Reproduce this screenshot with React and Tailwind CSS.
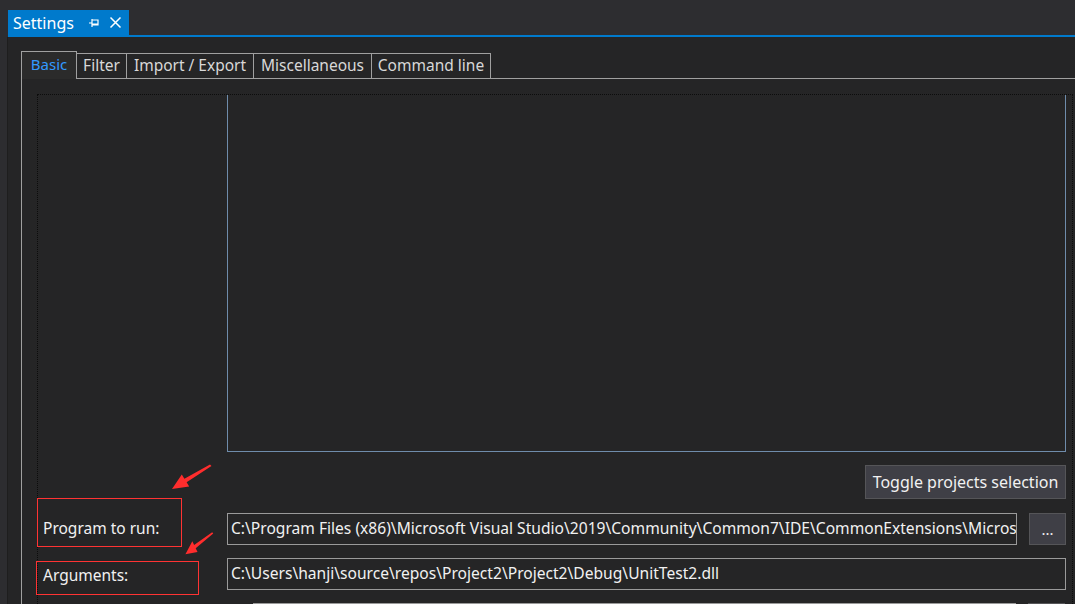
const Arrow = ({ className, w = 44, h = 30 }) => (
  <svg className={className} width={w} height={h} viewBox="0 0 44 30" preserveAspectRatio="none">
    <path d="M2 27 L11.8 12.6 L14.4 16.8 L40 2.5 L41.5 4 L16.6 20.2 L19.2 24.4 Z" fill="#ff2d2d" />
  </svg>
);

const TextBox = ({ children, className = "" }) => (
  <div
    className={`h-[32px] border border-[#9a9a9a] bg-[#252526] px-[3px] flex items-center overflow-hidden whitespace-nowrap text-[15.6px] text-[#f1f1f1] ${className}`}
  >
    {children}
  </div>
);

const tabs = [
  { label: "Filter", w: "w-[50px]" },
  { label: "Import / Export", w: "w-[127px]" },
  { label: "Miscellaneous", w: "w-[118px]" },
  { label: "Command line", w: "w-[119px]" },
];

export default function App() {
  return (
    <div
      className="w-[1075px] h-[604px] overflow-hidden bg-[#2d2d30] text-[15px] text-[#f1f1f1] relative"
      style={{ fontFamily: '"Noto Sans", "Open Sans", sans-serif' }}
    >
      {/* document tab */}
      <div className="h-[35px] pl-[8px] flex items-end">
        <div className="h-[25px] w-[121px] bg-[#007acc] flex items-center pl-[5px] text-white leading-none">
          <span className="text-[16px]">Settings</span>
          <svg width="12" height="12" viewBox="0 0 12 12" className="ml-[14px] mt-[1px]">
            <path d="M4 2 V10 M4 6 H1 M4 3 H10 V8 H4 M4 7 H10" stroke="white" strokeWidth="1.2" fill="none" />
          </svg>
          <svg width="13" height="13" viewBox="0 0 13 13" className="ml-[9px]">
            <path d="M1.5 1.5 L11.5 11.5 M11.5 1.5 L1.5 11.5" stroke="white" strokeWidth="1.5" />
          </svg>
        </div>
      </div>
      <div className="h-[2px] ml-[8px] bg-[#007acc]" />

      <div className="ml-[7px] h-[567px] bg-[#252526] pl-[13px] pt-[13px] border-l border-[#1e1e1e]">
        {/* tab headers */}
        <div className="flex items-end h-[28px]">
          <div className="h-[28px] w-[56px] border border-b-0 border-[#a0a0a0] bg-[#2b2b2b] text-[#3399ff] flex items-center justify-center pb-[2px] relative z-10 -mb-px">
            Basic
          </div>
          {tabs.map((t) => (
            <div
              key={t.label}
              className={`h-[25px] ${t.w} border border-l-0 border-b-0 border-[#a0a0a0] flex items-center justify-center text-[15.5px] text-[#d8d8d8]`}
            >
              {t.label}
            </div>
          ))}
        </div>

        {/* tab page */}
        <div className="border-l border-t border-[#a0a0a0] h-[600px] pl-[15px] pt-[15px]">
          <div className="border border-dotted border-[#0c0c0c] h-[600px] mr-[2px]">
            <div className="ml-[189px] w-[839px] h-[357px] border border-t-0 border-[#6f8cab]" />

            <div className="flex justify-end w-[1028px] mt-[13px]">
              <div className="h-[34px] w-[201px] bg-[#3f3f46] border border-[#555558] flex items-center justify-center text-[16px] text-[#f1f1f1]">
                Toggle projects selection
              </div>
            </div>

            <div className="flex items-center mt-[14px]">
              <div className="w-[189px] pl-[5px] text-[15.5px]">Program to run:</div>
              <TextBox className="w-[790px]">
                C:\Program Files (x86)\Microsoft Visual Studio\2019\Community\Common7\IDE\CommonExtensions\Micros
              </TextBox>
              <div className="ml-[12px] h-[32px] w-[37px] bg-[#3f3f46] border border-[#555558] flex items-center justify-center">
                ...
              </div>
            </div>

            <div className="flex items-center mt-[13px]">
              <div className="w-[189px] pl-[5px] mt-[3px] text-[15.5px]">Arguments:</div>
              <TextBox className="w-[839px]">
                C:\Users\hanji\source\repos\Project2\Project2\Debug\UnitTest2.dll
              </TextBox>
            </div>

            <div className="flex items-center mt-[13px]">
              <div className="w-[215px]" />
              <TextBox className="w-[763px]" />
              <div className="ml-[12px] h-[32px] w-[37px] bg-[#3f3f46] border border-[#555558]" />
            </div>
          </div>
        </div>
      </div>

      {/* annotations */}
      <div className="absolute left-[37px] top-[498px] w-[145px] h-[49px] border border-[#ff3333]" />
      <div className="absolute left-[36px] top-[561px] w-[163px] h-[34px] border border-[#ff3333]" />
      <Arrow className="absolute left-[170px] top-[462px]" />
      <Arrow className="absolute left-[184px] top-[530px]" w={31} h={27} />
    </div>
  );
}
